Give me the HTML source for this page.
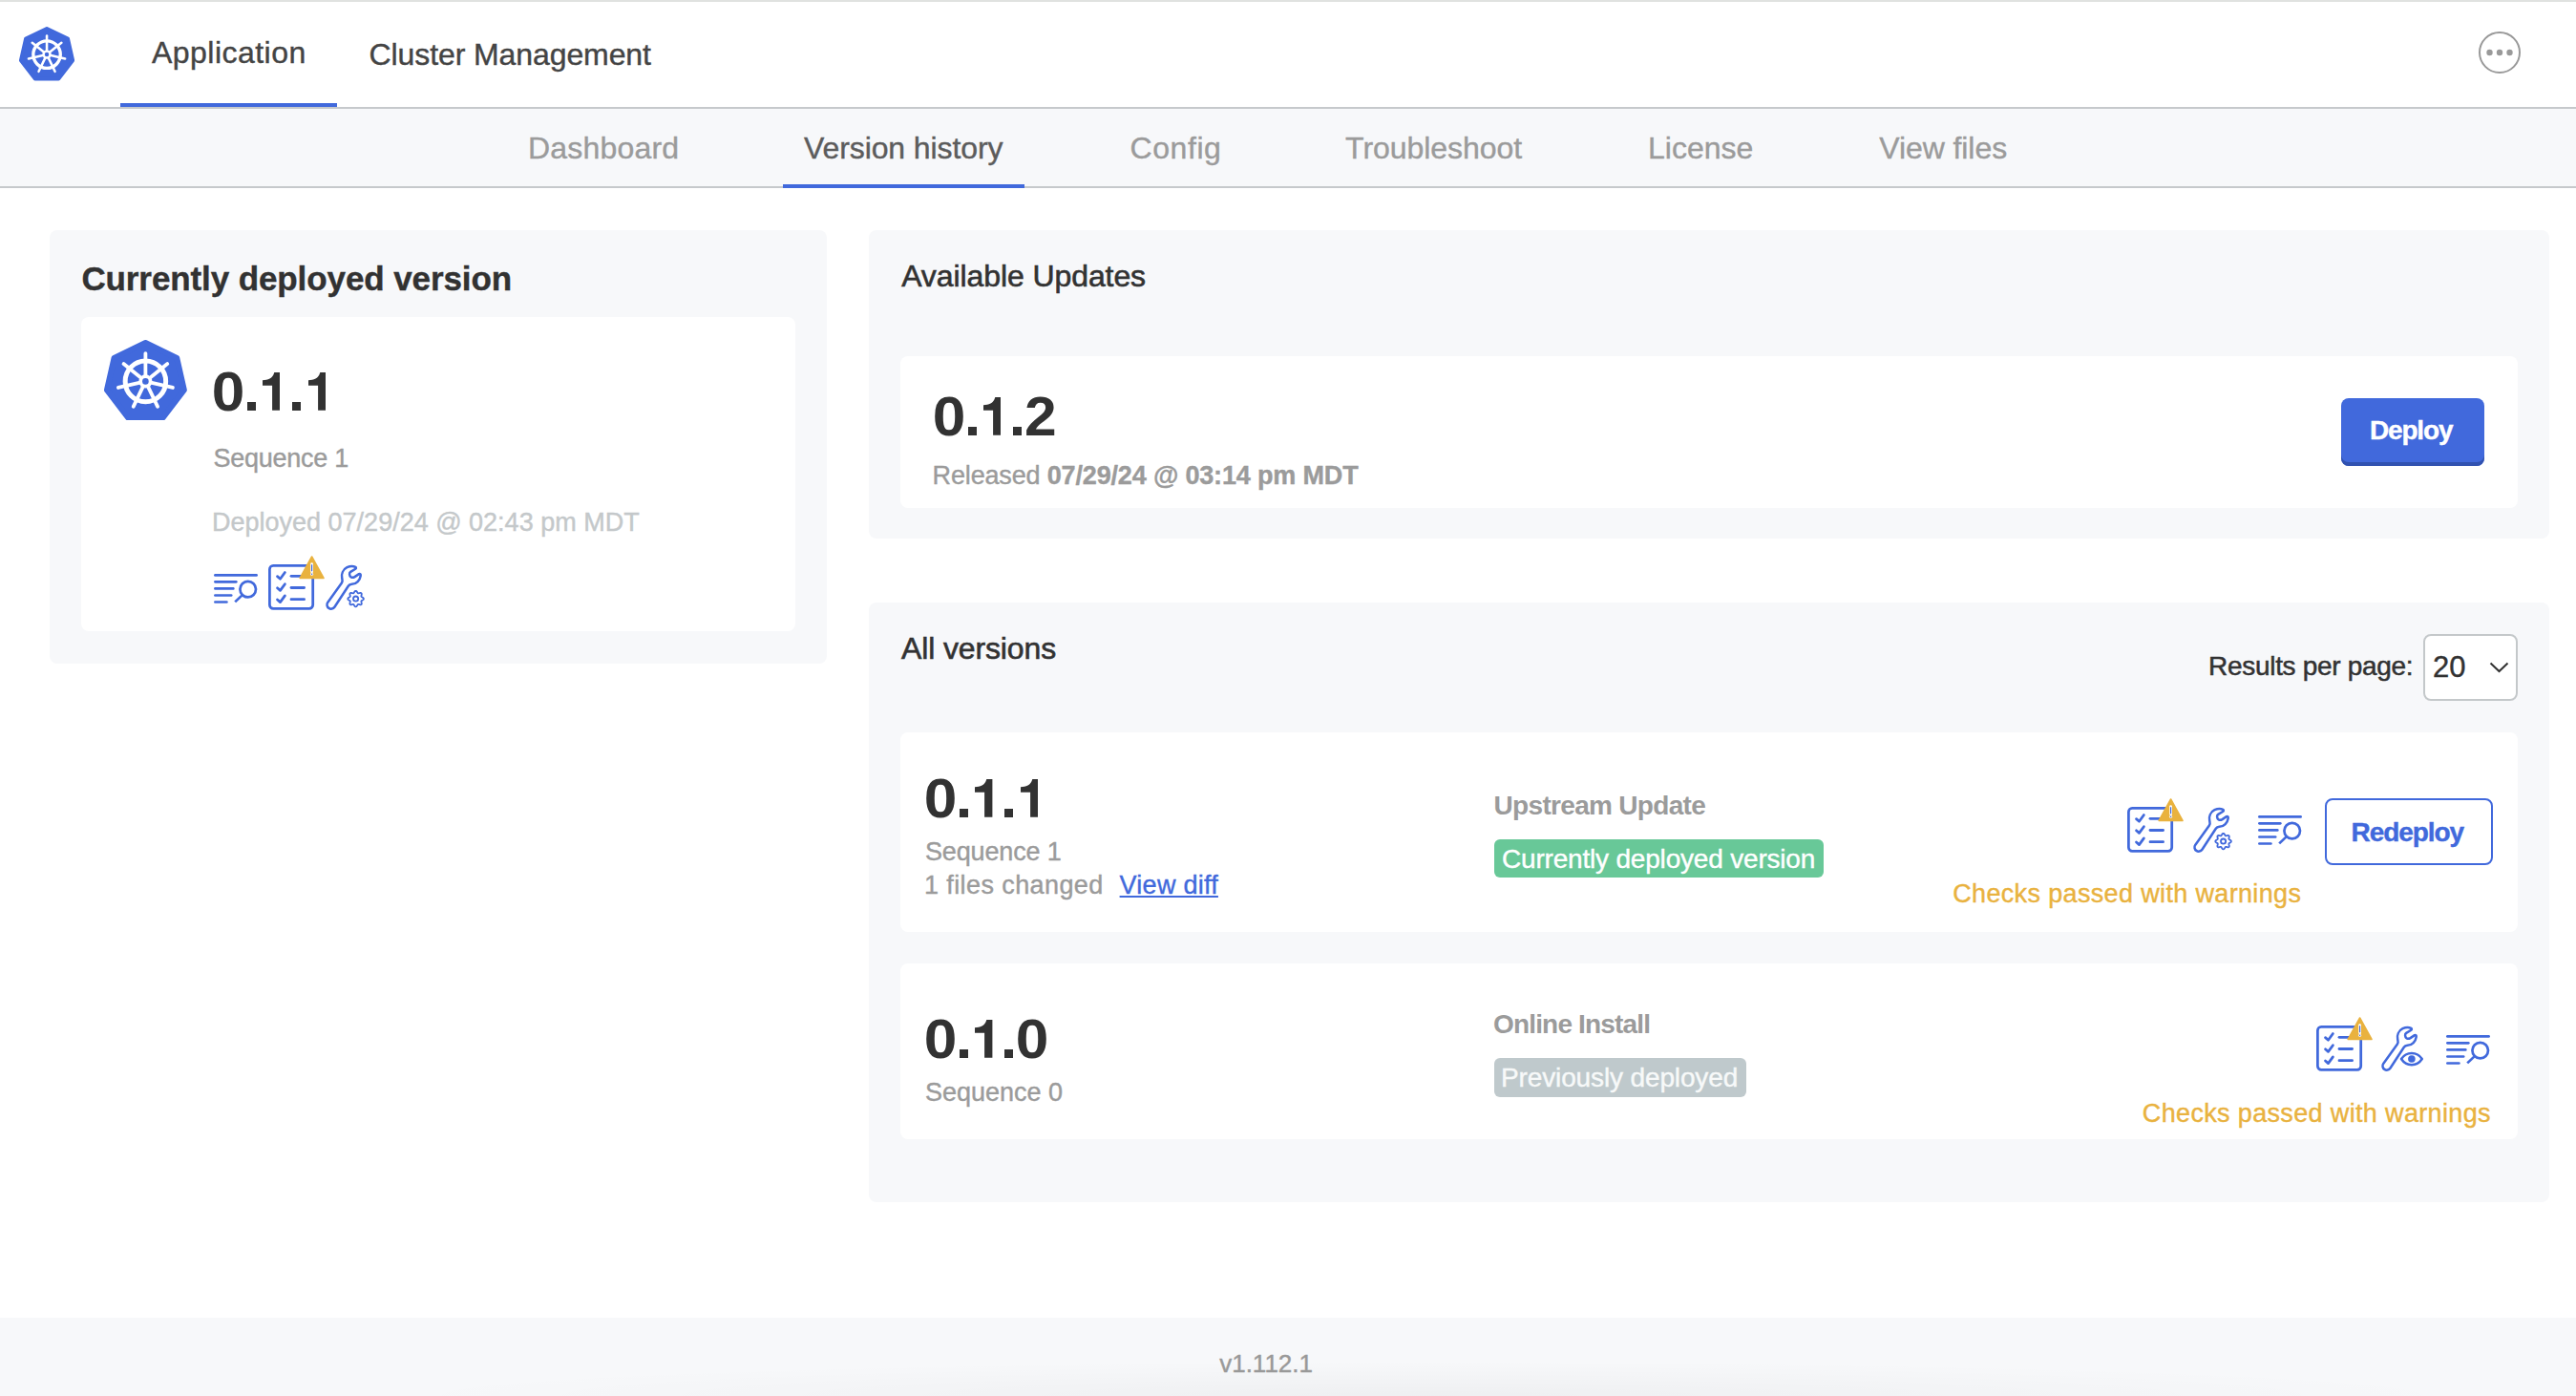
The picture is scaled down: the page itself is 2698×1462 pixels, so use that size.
<!DOCTYPE html>
<html><head><meta charset="utf-8"><style>
html,body{margin:0;padding:0;width:2698px;height:1462px;overflow:hidden;background:#fff;}
body{position:relative;font-family:"Liberation Sans",sans-serif;}
.t{position:absolute;white-space:nowrap;line-height:1;-webkit-text-stroke-width:0.4px;}
.r{position:absolute;}
u{text-decoration-thickness:2px;text-underline-offset:2.3px;}
</style></head><body>
<div class="r" style="left:0px;top:0px;width:2698px;height:2px;background:#e0e2e0;"></div>
<div class="r" style="left:0px;top:112px;width:2698px;height:2px;background:#c6c9cc;"></div>
<div class="r" style="left:0px;top:114px;width:2698px;height:81px;background:#f7f8fa;"></div>
<div class="r" style="left:0px;top:195px;width:2698px;height:2px;background:#c6c9cc;"></div>
<svg class="r" style="left:19.9px;top:28.3px;width:58.1px;height:56.3px" viewBox="5.2 5.8 86.6 83.6" preserveAspectRatio="none"><polygon points="48.50,8.80 81.26,24.58 88.84,57.99 66.74,86.73 30.26,86.73 8.16,57.99 15.74,24.58" fill="#4169dc" stroke="#4169dc" stroke-width="6" stroke-linejoin="round"/><circle cx="48.5" cy="49.0" r="21.2" fill="none" stroke="#fff" stroke-width="5"/><g stroke="#fff" stroke-width="3.8" stroke-linecap="round"><line x1="48.50" y1="49.00" x2="48.50" y2="19.80"/><line x1="48.50" y1="49.00" x2="71.33" y2="30.79"/><line x1="48.50" y1="49.00" x2="76.97" y2="55.50"/><line x1="48.50" y1="49.00" x2="61.17" y2="75.31"/><line x1="48.50" y1="49.00" x2="35.83" y2="75.31"/><line x1="48.50" y1="49.00" x2="20.03" y2="55.50"/><line x1="48.50" y1="49.00" x2="25.67" y2="30.79"/></g><circle cx="48.5" cy="49.0" r="7" fill="#fff"/><circle cx="48.5" cy="49.0" r="3.3" fill="#4169dc"/></svg>
<div class="t" style="left:159.0px;top:38.6px;font-size:32px;color:#444;font-weight:400;letter-spacing:0.47px;">Application</div>
<div class="r" style="left:126px;top:108px;width:227px;height:4px;background:#4169dc;"></div>
<div class="t" style="left:386.6px;top:40.7px;font-size:32px;color:#444;font-weight:400;letter-spacing:-0.1px;">Cluster Management</div>
<svg class="r" style="left:2596px;top:33px;width:44px;height:44px" viewBox="0 0 44 44" preserveAspectRatio="none"><circle cx="22" cy="22" r="21" fill="none" stroke="#999" stroke-width="2"/><circle cx="11.5" cy="22" r="3.2" fill="#999"/><circle cx="22" cy="22" r="3.2" fill="#999"/><circle cx="32.5" cy="22" r="3.2" fill="#999"/></svg>
<div class="t" style="left:553.0px;top:139.3px;font-size:32px;color:#9b9b9b;font-weight:400;letter-spacing:0.2px;">Dashboard</div>
<div class="t" style="left:842.0px;top:139.3px;font-size:32px;color:#5c5c5c;font-weight:400;letter-spacing:-0.1px;">Version history</div>
<div class="t" style="left:1183.6px;top:139.3px;font-size:32px;color:#9b9b9b;font-weight:400;letter-spacing:0.56px;">Config</div>
<div class="t" style="left:1409.1px;top:139.3px;font-size:32px;color:#9b9b9b;font-weight:400;letter-spacing:-0.05px;">Troubleshoot</div>
<div class="t" style="left:1726.0px;top:139.3px;font-size:32px;color:#9b9b9b;font-weight:400;">License</div>
<div class="t" style="left:1968.2px;top:139.3px;font-size:32px;color:#9b9b9b;font-weight:400;letter-spacing:-0.07px;">View files</div>
<div class="r" style="left:820px;top:193px;width:253px;height:4px;background:#4169dc;"></div>
<div class="r" style="left:52px;top:241px;width:814px;height:454px;background:#f7f8fa;border-radius:8px"></div>
<div class="t" style="left:85.4px;top:273.5px;font-size:35px;color:#323232;font-weight:700;letter-spacing:-0.1px;">Currently deployed version</div>
<div class="r" style="left:85px;top:332px;width:748px;height:329px;background:#fff;border-radius:8px"></div>
<svg class="r" style="left:109.2px;top:355.8px;width:86.8px;height:84.0px" viewBox="5.2 5.8 86.6 83.6" preserveAspectRatio="none"><polygon points="48.50,8.80 81.26,24.58 88.84,57.99 66.74,86.73 30.26,86.73 8.16,57.99 15.74,24.58" fill="#4169dc" stroke="#4169dc" stroke-width="6" stroke-linejoin="round"/><circle cx="48.5" cy="49.0" r="21.2" fill="none" stroke="#fff" stroke-width="5"/><g stroke="#fff" stroke-width="3.8" stroke-linecap="round"><line x1="48.50" y1="49.00" x2="48.50" y2="19.80"/><line x1="48.50" y1="49.00" x2="71.33" y2="30.79"/><line x1="48.50" y1="49.00" x2="76.97" y2="55.50"/><line x1="48.50" y1="49.00" x2="61.17" y2="75.31"/><line x1="48.50" y1="49.00" x2="35.83" y2="75.31"/><line x1="48.50" y1="49.00" x2="20.03" y2="55.50"/><line x1="48.50" y1="49.00" x2="25.67" y2="30.79"/></g><circle cx="48.5" cy="49.0" r="7" fill="#fff"/><circle cx="48.5" cy="49.0" r="3.3" fill="#4169dc"/></svg>
<div class="t" style="left:222.21px;top:380.69px;font-size:58px;color:#323232;font-weight:700;-webkit-text-stroke-width:0;transform:scale(1.072,1.0);transform-origin:2.29px 49.11px">0</div>
<div class="r" style="left:258.80px;top:421.10px;width:9.1px;height:8.7px;background:#323232"></div>
<svg class="r" style="left:275.10px;top:390.00px;width:18.4px;height:39.8px" viewBox="0 0 18.4 39.8"><path d="M12.3,0 L18.4,0 L18.4,39.8 L10.1,39.8 L10.1,13.75 L0,13.75 L0,8.15 C5.5,8.1 10.6,6.5 12.3,0 Z" fill="#323232"/></svg>
<div class="r" style="left:306.20px;top:421.10px;width:9.1px;height:8.7px;background:#323232"></div>
<svg class="r" style="left:323.00px;top:390.00px;width:18.4px;height:39.8px" viewBox="0 0 18.4 39.8"><path d="M12.3,0 L18.4,0 L18.4,39.8 L10.1,39.8 L10.1,13.75 L0,13.75 L0,8.15 C5.5,8.1 10.6,6.5 12.3,0 Z" fill="#323232"/></svg>
<div class="t" style="left:223.6px;top:466.5px;font-size:27px;color:#9b9b9b;font-weight:400;letter-spacing:-0.26px;">Sequence 1</div>
<div class="t" style="left:222.0px;top:533.5px;font-size:27px;color:#c4c8ca;font-weight:400;">Deployed 07/29/24 @ 02:43 pm MDT</div>
<div class="r" style="left:910px;top:241px;width:1760px;height:323px;background:#f7f8fa;border-radius:8px"></div>
<div class="t" style="left:944.2px;top:272.6px;font-size:32px;color:#323232;font-weight:400;letter-spacing:-0.09px;-webkit-text-stroke-width:0.6px">Available Updates</div>
<div class="r" style="left:943px;top:373px;width:1694px;height:159px;background:#fff;border-radius:8px"></div>
<div class="t" style="left:976.91px;top:406.79px;font-size:58px;color:#323232;font-weight:700;-webkit-text-stroke-width:0;transform:scale(1.072,1.0);transform-origin:2.29px 49.11px">0</div>
<div class="r" style="left:1013.50px;top:447.20px;width:9.1px;height:8.7px;background:#323232"></div>
<svg class="r" style="left:1029.80px;top:416.10px;width:18.4px;height:39.8px" viewBox="0 0 18.4 39.8"><path d="M12.3,0 L18.4,0 L18.4,39.8 L10.1,39.8 L10.1,13.75 L0,13.75 L0,8.15 C5.5,8.1 10.6,6.5 12.3,0 Z" fill="#323232"/></svg>
<div class="r" style="left:1060.90px;top:447.20px;width:9.1px;height:8.7px;background:#323232"></div>
<div class="t" style="left:1072.89px;top:406.79px;font-size:58px;color:#323232;font-weight:700;-webkit-text-stroke-width:0;transform:scale(1.043,1.0);transform-origin:2.01px 49.11px">2</div>
<div class="t" style="left:976.6px;top:485.1px;font-size:27px;color:#9b9b9b;font-weight:400;letter-spacing:-0.16px;">Released <b>07/29/24 @ 03:14 pm MDT</b></div>
<div class="r" style="left:2452px;top:417px;width:150px;height:71px;background:#4169dc;border-radius:8px;box-shadow:inset 0 -4px 0 #3152b0"></div>
<div class="t" style="left:2482.0px;top:436.7px;font-size:28px;color:#fff;font-weight:700;letter-spacing:-1.18px;">Deploy</div>
<div class="r" style="left:910px;top:631px;width:1760px;height:628px;background:#f7f8fa;border-radius:8px"></div>
<div class="t" style="left:944.0px;top:662.6px;font-size:32px;color:#323232;font-weight:400;letter-spacing:-0.13px;-webkit-text-stroke-width:0.6px">All versions</div>
<div class="t" style="left:2313.1px;top:684.3px;font-size:28px;color:#323232;font-weight:400;letter-spacing:-0.31px;-webkit-text-stroke-width:0.5px">Results per page:</div>
<div class="r" style="left:2538px;top:664px;width:99px;height:70px;background:#fff;border:2px solid #c4c8ca;border-radius:8px;box-sizing:border-box"></div>
<div class="t" style="left:2548.0px;top:682.9px;font-size:31px;color:#323232;font-weight:400;">20</div>
<svg class="r" style="left:2607px;top:692px;width:21px;height:14px" viewBox="0 0 21 14" preserveAspectRatio="none"><polyline points="1.5,2.5 10.5,11 19.5,2.5" fill="none" stroke="#323232" stroke-width="2"/></svg>
<div class="r" style="left:943px;top:767px;width:1694px;height:209px;background:#fff;border-radius:8px"></div>
<div class="t" style="left:968.31px;top:806.79px;font-size:58px;color:#323232;font-weight:700;-webkit-text-stroke-width:0;transform:scale(1.072,1.0);transform-origin:2.29px 49.11px">0</div>
<div class="r" style="left:1004.90px;top:847.20px;width:9.1px;height:8.7px;background:#323232"></div>
<svg class="r" style="left:1021.20px;top:816.10px;width:18.4px;height:39.8px" viewBox="0 0 18.4 39.8"><path d="M12.3,0 L18.4,0 L18.4,39.8 L10.1,39.8 L10.1,13.75 L0,13.75 L0,8.15 C5.5,8.1 10.6,6.5 12.3,0 Z" fill="#323232"/></svg>
<div class="r" style="left:1052.30px;top:847.20px;width:9.1px;height:8.7px;background:#323232"></div>
<svg class="r" style="left:1069.10px;top:816.10px;width:18.4px;height:39.8px" viewBox="0 0 18.4 39.8"><path d="M12.3,0 L18.4,0 L18.4,39.8 L10.1,39.8 L10.1,13.75 L0,13.75 L0,8.15 C5.5,8.1 10.6,6.5 12.3,0 Z" fill="#323232"/></svg>
<div class="t" style="left:969.0px;top:879.0px;font-size:27px;color:#9b9b9b;font-weight:400;letter-spacing:-0.14px;">Sequence 1</div>
<div class="t" style="left:968.0px;top:913.9px;font-size:27px;color:#9b9b9b;font-weight:400;letter-spacing:0.4px;">1 files changed</div>
<div class="t" style="left:1172.6px;top:913.9px;font-size:27px;color:#4169dc;font-weight:400;letter-spacing:0.25px;"><u>View diff</u></div>
<div class="t" style="left:1564.6px;top:829.9px;font-size:28px;color:#9b9b9b;font-weight:700;letter-spacing:-0.69px;-webkit-text-stroke-width:0">Upstream Update</div>
<div class="r" style="left:1565px;top:879px;width:345px;height:40px;background:#68c898;border-radius:6px"></div>
<div class="t" style="left:1573.0px;top:885.8px;font-size:28px;color:#fff;font-weight:400;letter-spacing:-0.19px;">Currently deployed version</div>
<div class="r" style="left:2435px;top:836px;width:176px;height:70px;border:2px solid #4169dc;border-radius:8px;box-sizing:border-box;background:#fff"></div>
<div class="t" style="left:2462.6px;top:857.5px;font-size:28px;color:#4169dc;font-weight:700;letter-spacing:-1.07px;">Redeploy</div>
<div class="t" style="left:2045.2px;top:923.0px;font-size:27px;color:#e9b23f;font-weight:400;letter-spacing:0.35px;">Checks passed with warnings</div>
<div class="r" style="left:943px;top:1009px;width:1694px;height:184px;background:#fff;border-radius:8px"></div>
<div class="t" style="left:968.31px;top:1058.59px;font-size:58px;color:#323232;font-weight:700;-webkit-text-stroke-width:0;transform:scale(1.072,1.0);transform-origin:2.29px 49.11px">0</div>
<div class="r" style="left:1004.90px;top:1099.00px;width:9.1px;height:8.7px;background:#323232"></div>
<svg class="r" style="left:1021.20px;top:1067.90px;width:18.4px;height:39.8px" viewBox="0 0 18.4 39.8"><path d="M12.3,0 L18.4,0 L18.4,39.8 L10.1,39.8 L10.1,13.75 L0,13.75 L0,8.15 C5.5,8.1 10.6,6.5 12.3,0 Z" fill="#323232"/></svg>
<div class="r" style="left:1052.30px;top:1099.00px;width:9.1px;height:8.7px;background:#323232"></div>
<div class="t" style="left:1063.61px;top:1058.59px;font-size:58px;color:#323232;font-weight:700;-webkit-text-stroke-width:0;transform:scale(1.072,1.0);transform-origin:2.29px 49.11px">0</div>
<div class="t" style="left:969.0px;top:1131.1px;font-size:27px;color:#9b9b9b;font-weight:400;">Sequence 0</div>
<div class="t" style="left:1564.0px;top:1058.8px;font-size:28px;color:#9b9b9b;font-weight:700;letter-spacing:-0.83px;-webkit-text-stroke-width:0">Online Install</div>
<div class="r" style="left:1565px;top:1108px;width:264px;height:41px;background:#bfc9cc;border-radius:6px"></div>
<div class="t" style="left:1572.0px;top:1115.3px;font-size:28px;color:#f7f9f9;font-weight:400;letter-spacing:-0.13px;">Previously deployed</div>
<div class="t" style="left:2243.8px;top:1153.3px;font-size:27px;color:#e9b23f;font-weight:400;letter-spacing:0.35px;">Checks passed with warnings</div>
<div class="r" style="left:0px;top:1380px;width:2698px;height:82px;background:#f7f8fa;"></div>
<div class="r" style="left:400px;top:1380px;width:2200px;height:82px;background:radial-gradient(ellipse 50% 45% at 50% 100%, rgba(0,0,0,0.035), rgba(0,0,0,0))"></div>
<div class="t" style="left:1277.2px;top:1415.2px;font-size:26px;color:#999;font-weight:-webkit-text-stroke-width:0.15px;">v1.112.1</div>
<svg class="r" style="left:224.0px;top:600.8px;width:48.0px;height:32.0px;overflow:visible" viewBox="0 0 48 32"><g stroke="#4169dc" stroke-width="2.7" stroke-linecap="round" fill="none"><line x1="1.4" y1="1.4" x2="44.6" y2="1.4"/><line x1="1.4" y1="8.3" x2="23.3" y2="8.3"/><line x1="1.4" y1="15.4" x2="20.3" y2="15.4"/><line x1="1.4" y1="22.5" x2="18.2" y2="22.5"/><line x1="1.4" y1="29.5" x2="13.4" y2="29.5"/><circle cx="35.7" cy="16.1" r="8.3"/><line x1="29.3" y1="22.6" x2="22.2" y2="29.4" stroke-linecap="butt"/></g></svg>
<svg class="r" style="left:281.1px;top:591.0px;width:60.0px;height:50.0px;overflow:visible" viewBox="0 0 60 50"><g stroke="#4169dc" stroke-width="2.76" stroke-linecap="round" stroke-linejoin="round" fill="none"><rect x="1.4" y="1.4" width="45.3" height="45" rx="3.8"/><polyline points="9.5,12.6 12.5,15.2 17.4,8.5"/><line x1="24.0" y1="12.3" x2="37.6" y2="12.3"/><polyline points="9.5,24.799999999999997 12.5,27.4 17.4,20.7"/><line x1="24.0" y1="24.5" x2="37.6" y2="24.5"/><polyline points="9.5,37.0 12.5,39.599999999999994 17.4,32.9"/><line x1="24.0" y1="36.7" x2="37.6" y2="36.7"/></g><path d="M45.6,-8.0 L58.0,14.5 L33.2,14.5 Z" fill="#e9b23f" stroke="#e9b23f" stroke-width="1.6" stroke-linejoin="round"/><line x1="45.6" y1="-0.4" x2="45.6" y2="7.8" stroke="#fff" stroke-width="2.8" stroke-linecap="round"/><line x1="45.6" y1="0.3" x2="45.6" y2="7.2" stroke="#4169dc" stroke-width="1.2"/><circle cx="45.6" cy="10.2" r="1.5" fill="#fff"/><circle cx="45.6" cy="10.2" r="0.75" fill="#4169dc"/></svg>
<svg class="r" style="left:336.0px;top:586.0px;width:50.0px;height:58.0px;overflow:visible" viewBox="0 0 50 58"><path d="M14.4,49.7 A4.3,4.3 0 0 1 7.2,44.9 L21.9,24.6 C23.2,22.8 22.6,21.5 22.2,19.6 C21.3,15.3 23.0,10.5 27.5,8.2 C30.5,6.8 34.5,6.9 36.3,7.9 C37.3,8.5 37.0,9.4 36.0,10.0 L31.2,12.9 C29.5,14.0 29.8,16.9 31.5,18.2 C32.8,19.1 34.2,18.9 35.5,18.1 L40.0,15.1 C41.2,14.5 42.0,15.6 41.7,17.0 C41.0,21.5 37.5,25.6 32.5,25.8 C30.8,25.9 29.6,26.5 28.8,27.7 Z" fill="none" stroke="#4169dc" stroke-width="2.5" stroke-linejoin="round"/><path d="M36.60,32.80 L37.13,32.95 L37.62,33.37 L38.02,33.94 L38.36,34.53 L38.67,35.01 L39.01,35.28 L39.45,35.33 L40.00,35.21 L40.66,35.03 L41.35,34.91 L41.98,34.96 L42.47,35.23 L42.74,35.72 L42.79,36.35 L42.67,37.04 L42.49,37.70 L42.37,38.25 L42.42,38.69 L42.69,39.03 L43.17,39.34 L43.76,39.68 L44.33,40.08 L44.75,40.57 L44.90,41.10 L44.75,41.63 L44.33,42.12 L43.76,42.52 L43.17,42.86 L42.69,43.17 L42.42,43.51 L42.37,43.95 L42.49,44.50 L42.67,45.16 L42.79,45.85 L42.74,46.48 L42.47,46.97 L41.98,47.24 L41.35,47.29 L40.66,47.17 L40.00,46.99 L39.45,46.87 L39.01,46.92 L38.67,47.19 L38.36,47.67 L38.02,48.26 L37.62,48.83 L37.13,49.25 L36.60,49.40 L36.07,49.25 L35.58,48.83 L35.18,48.26 L34.84,47.67 L34.53,47.19 L34.19,46.92 L33.75,46.87 L33.20,46.99 L32.54,47.17 L31.85,47.29 L31.22,47.24 L30.73,46.97 L30.46,46.48 L30.41,45.85 L30.53,45.16 L30.71,44.50 L30.83,43.95 L30.78,43.51 L30.51,43.17 L30.03,42.86 L29.44,42.52 L28.87,42.12 L28.45,41.63 L28.30,41.10 L28.45,40.57 L28.87,40.08 L29.44,39.68 L30.03,39.34 L30.51,39.03 L30.78,38.69 L30.83,38.25 L30.71,37.70 L30.53,37.04 L30.41,36.35 L30.46,35.72 L30.73,35.23 L31.22,34.96 L31.85,34.91 L32.54,35.03 L33.20,35.21 L33.75,35.33 L34.19,35.28 L34.53,35.01 L34.84,34.53 L35.18,33.94 L35.58,33.37 L36.07,32.95 Z" fill="none" stroke="#4169dc" stroke-width="1.8" stroke-linejoin="round"/><circle cx="36.6" cy="41.1" r="2.6" fill="none" stroke="#4169dc" stroke-width="1.8"/></svg>
<svg class="r" style="left:2228.2px;top:845.0px;width:60.0px;height:50.0px;overflow:visible" viewBox="0 0 60 50"><g stroke="#4169dc" stroke-width="2.76" stroke-linecap="round" stroke-linejoin="round" fill="none"><rect x="1.4" y="1.4" width="45.3" height="45" rx="3.8"/><polyline points="9.5,12.6 12.5,15.2 17.4,8.5"/><line x1="24.0" y1="12.3" x2="37.6" y2="12.3"/><polyline points="9.5,24.799999999999997 12.5,27.4 17.4,20.7"/><line x1="24.0" y1="24.5" x2="37.6" y2="24.5"/><polyline points="9.5,37.0 12.5,39.599999999999994 17.4,32.9"/><line x1="24.0" y1="36.7" x2="37.6" y2="36.7"/></g><path d="M45.6,-8.0 L58.0,14.5 L33.2,14.5 Z" fill="#e9b23f" stroke="#e9b23f" stroke-width="1.6" stroke-linejoin="round"/><line x1="45.6" y1="-0.4" x2="45.6" y2="7.8" stroke="#fff" stroke-width="2.8" stroke-linecap="round"/><line x1="45.6" y1="0.3" x2="45.6" y2="7.2" stroke="#4169dc" stroke-width="1.2"/><circle cx="45.6" cy="10.2" r="1.5" fill="#fff"/><circle cx="45.6" cy="10.2" r="0.75" fill="#4169dc"/></svg>
<svg class="r" style="left:2291.9px;top:840.0px;width:50.0px;height:58.0px;overflow:visible" viewBox="0 0 50 58"><path d="M14.4,49.7 A4.3,4.3 0 0 1 7.2,44.9 L21.9,24.6 C23.2,22.8 22.6,21.5 22.2,19.6 C21.3,15.3 23.0,10.5 27.5,8.2 C30.5,6.8 34.5,6.9 36.3,7.9 C37.3,8.5 37.0,9.4 36.0,10.0 L31.2,12.9 C29.5,14.0 29.8,16.9 31.5,18.2 C32.8,19.1 34.2,18.9 35.5,18.1 L40.0,15.1 C41.2,14.5 42.0,15.6 41.7,17.0 C41.0,21.5 37.5,25.6 32.5,25.8 C30.8,25.9 29.6,26.5 28.8,27.7 Z" fill="none" stroke="#4169dc" stroke-width="2.5" stroke-linejoin="round"/><path d="M36.60,32.80 L37.13,32.95 L37.62,33.37 L38.02,33.94 L38.36,34.53 L38.67,35.01 L39.01,35.28 L39.45,35.33 L40.00,35.21 L40.66,35.03 L41.35,34.91 L41.98,34.96 L42.47,35.23 L42.74,35.72 L42.79,36.35 L42.67,37.04 L42.49,37.70 L42.37,38.25 L42.42,38.69 L42.69,39.03 L43.17,39.34 L43.76,39.68 L44.33,40.08 L44.75,40.57 L44.90,41.10 L44.75,41.63 L44.33,42.12 L43.76,42.52 L43.17,42.86 L42.69,43.17 L42.42,43.51 L42.37,43.95 L42.49,44.50 L42.67,45.16 L42.79,45.85 L42.74,46.48 L42.47,46.97 L41.98,47.24 L41.35,47.29 L40.66,47.17 L40.00,46.99 L39.45,46.87 L39.01,46.92 L38.67,47.19 L38.36,47.67 L38.02,48.26 L37.62,48.83 L37.13,49.25 L36.60,49.40 L36.07,49.25 L35.58,48.83 L35.18,48.26 L34.84,47.67 L34.53,47.19 L34.19,46.92 L33.75,46.87 L33.20,46.99 L32.54,47.17 L31.85,47.29 L31.22,47.24 L30.73,46.97 L30.46,46.48 L30.41,45.85 L30.53,45.16 L30.71,44.50 L30.83,43.95 L30.78,43.51 L30.51,43.17 L30.03,42.86 L29.44,42.52 L28.87,42.12 L28.45,41.63 L28.30,41.10 L28.45,40.57 L28.87,40.08 L29.44,39.68 L30.03,39.34 L30.51,39.03 L30.78,38.69 L30.83,38.25 L30.71,37.70 L30.53,37.04 L30.41,36.35 L30.46,35.72 L30.73,35.23 L31.22,34.96 L31.85,34.91 L32.54,35.03 L33.20,35.21 L33.75,35.33 L34.19,35.28 L34.53,35.01 L34.84,34.53 L35.18,33.94 L35.58,33.37 L36.07,32.95 Z" fill="none" stroke="#4169dc" stroke-width="1.8" stroke-linejoin="round"/><circle cx="36.6" cy="41.1" r="2.6" fill="none" stroke="#4169dc" stroke-width="1.8"/></svg>
<svg class="r" style="left:2365.1px;top:853.7px;width:48.0px;height:32.0px;overflow:visible" viewBox="0 0 48 32"><g stroke="#4169dc" stroke-width="2.7" stroke-linecap="round" fill="none"><line x1="1.4" y1="1.4" x2="44.6" y2="1.4"/><line x1="1.4" y1="8.3" x2="23.3" y2="8.3"/><line x1="1.4" y1="15.4" x2="20.3" y2="15.4"/><line x1="1.4" y1="22.5" x2="18.2" y2="22.5"/><line x1="1.4" y1="29.5" x2="13.4" y2="29.5"/><circle cx="35.7" cy="16.1" r="8.3"/><line x1="29.3" y1="22.6" x2="22.2" y2="29.4" stroke-linecap="butt"/></g></svg>
<svg class="r" style="left:2426.2px;top:1074.0px;width:60.0px;height:50.0px;overflow:visible" viewBox="0 0 60 50"><g stroke="#4169dc" stroke-width="2.76" stroke-linecap="round" stroke-linejoin="round" fill="none"><rect x="1.4" y="1.4" width="45.3" height="45" rx="3.8"/><polyline points="9.5,12.6 12.5,15.2 17.4,8.5"/><line x1="24.0" y1="12.3" x2="37.6" y2="12.3"/><polyline points="9.5,24.799999999999997 12.5,27.4 17.4,20.7"/><line x1="24.0" y1="24.5" x2="37.6" y2="24.5"/><polyline points="9.5,37.0 12.5,39.599999999999994 17.4,32.9"/><line x1="24.0" y1="36.7" x2="37.6" y2="36.7"/></g><path d="M45.6,-8.0 L58.0,14.5 L33.2,14.5 Z" fill="#e9b23f" stroke="#e9b23f" stroke-width="1.6" stroke-linejoin="round"/><line x1="45.6" y1="-0.4" x2="45.6" y2="7.8" stroke="#fff" stroke-width="2.8" stroke-linecap="round"/><line x1="45.6" y1="0.3" x2="45.6" y2="7.2" stroke="#4169dc" stroke-width="1.2"/><circle cx="45.6" cy="10.2" r="1.5" fill="#fff"/><circle cx="45.6" cy="10.2" r="0.75" fill="#4169dc"/></svg>
<svg class="r" style="left:2489.0px;top:1069.3px;width:50.0px;height:58.0px;overflow:visible" viewBox="0 0 50 58"><path d="M14.4,49.7 A4.3,4.3 0 0 1 7.2,44.9 L21.9,24.6 C23.2,22.8 22.6,21.5 22.2,19.6 C21.3,15.3 23.0,10.5 27.5,8.2 C30.5,6.8 34.5,6.9 36.3,7.9 C37.3,8.5 37.0,9.4 36.0,10.0 L31.2,12.9 C29.5,14.0 29.8,16.9 31.5,18.2 C32.8,19.1 34.2,18.9 35.5,18.1 L40.0,15.1 C41.2,14.5 42.0,15.6 41.7,17.0 C41.0,21.5 37.5,25.6 32.5,25.8 C30.8,25.9 29.6,26.5 28.8,27.7 Z" fill="none" stroke="#4169dc" stroke-width="2.5" stroke-linejoin="round"/><path d="M26.0,40.0 C31.5,32.0 42.3,32.0 47.8,40.0 C42.3,48.2 31.5,48.2 26.0,40.0 Z" fill="#fff" stroke="#4169dc" stroke-width="2.5" stroke-linejoin="round"/><circle cx="36.9" cy="40.0" r="3.8" fill="#4169dc"/></svg>
<svg class="r" style="left:2562.3px;top:1083.5px;width:48.0px;height:32.0px;overflow:visible" viewBox="0 0 48 32"><g stroke="#4169dc" stroke-width="2.7" stroke-linecap="round" fill="none"><line x1="1.4" y1="1.4" x2="44.6" y2="1.4"/><line x1="1.4" y1="8.3" x2="23.3" y2="8.3"/><line x1="1.4" y1="15.4" x2="20.3" y2="15.4"/><line x1="1.4" y1="22.5" x2="18.2" y2="22.5"/><line x1="1.4" y1="29.5" x2="13.4" y2="29.5"/><circle cx="35.7" cy="16.1" r="8.3"/><line x1="29.3" y1="22.6" x2="22.2" y2="29.4" stroke-linecap="butt"/></g></svg>
</body></html>
